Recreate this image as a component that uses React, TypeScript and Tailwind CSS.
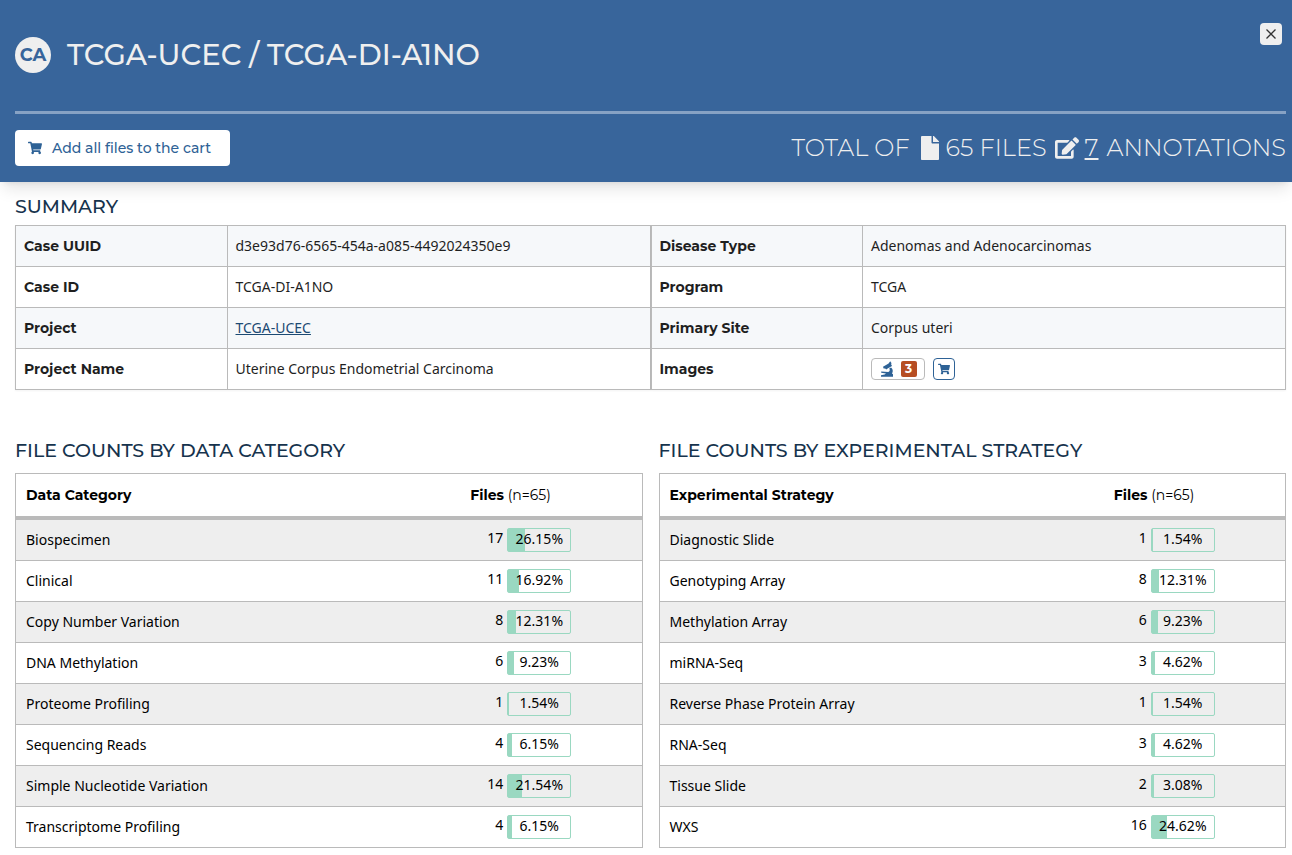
import type { ReactNode } from "react";
import { FaShoppingCart, FaFile, FaEdit } from "react-icons/fa";

const display = "font-['Montserrat','Inter',sans-serif]";

type Count = { name: string; files: number };

const TOTAL = 65;

const categories: Count[] = [
  { name: "Biospecimen", files: 17 },
  { name: "Clinical", files: 11 },
  { name: "Copy Number Variation", files: 8 },
  { name: "DNA Methylation", files: 6 },
  { name: "Proteome Profiling", files: 1 },
  { name: "Sequencing Reads", files: 4 },
  { name: "Simple Nucleotide Variation", files: 14 },
  { name: "Transcriptome Profiling", files: 4 },
];

const strategies: Count[] = [
  { name: "Diagnostic Slide", files: 1 },
  { name: "Genotyping Array", files: 8 },
  { name: "Methylation Array", files: 6 },
  { name: "miRNA-Seq", files: 3 },
  { name: "Reverse Phase Protein Array", files: 1 },
  { name: "RNA-Seq", files: 3 },
  { name: "Tissue Slide", files: 2 },
  { name: "WXS", files: 16 },
];

function MicroscopeIcon() {
  return (
    <svg viewBox="0 0 13 16" className="h-4 w-[13px]" fill="currentColor" aria-hidden="true">
      <path d="M10.2 0.2 L11.6 2.2 L11 3 L12 5 L7.6 7.6 L6.2 8.6 L5.2 7.6 L3.6 7.6 L3 5.8 L8.6 2.4 Z" />
      <path d="M9.2 7.6 L11 6.4 C13 8 13.2 10.4 12 12.6 L13 13.2 V15.8 H1 V14.2 L4.6 13.6 L6 12.6 L1.2 11.8 V10.6 L8.4 11 C9.8 10.4 10.2 8.8 9.2 7.6 Z" />
    </svg>
  );
}

function SectionTitle({ children }: { children: ReactNode }) {
  return <h2 className={`${display} text-[19px] leading-7 font-medium text-[#16334d]`}>{children}</h2>;
}

function SummaryTable({ rows }: { rows: [string, ReactNode][] }) {
  return (
    <table className="w-1/2 table-fixed border-collapse text-sm text-[#1f1f1f] shadow-xs">
      <tbody>
        {rows.map(([label, value]) => (
          <tr key={label} className="h-[41px] odd:bg-[#f6f8fa]">
            <th scope="row" className={`${display} w-1/3 border border-[#bababa] px-2 text-left font-bold`}>
              {label}
            </th>
            <td className="border border-[#bababa] px-2">{value}</td>
          </tr>
        ))}
      </tbody>
    </table>
  );
}

function CountTable({ title, column, rows }: { title: string; column: string; rows: Count[] }) {
  return (
    <section className="flex-1">
      <SectionTitle>{title}</SectionTitle>
      <table className="mt-2 w-full table-fixed border-collapse border border-[#bababa] text-sm text-black">
        <thead>
          <tr className={`${display} h-11 border-b-4 border-[#bababa]`}>
            <th scope="col" className="w-[71%] px-2.5 text-left font-bold">{column}</th>
            <th scope="col" className="px-2.5 text-left font-normal">
              <span className="font-bold">Files</span> (n={TOTAL})
            </th>
          </tr>
        </thead>
        <tbody>
          {rows.map(({ name, files }) => {
            const percent = ((files / TOTAL) * 100).toFixed(2) + "%";
            return (
              <tr key={name} className="h-[41px] border-b border-[#bababa] first:h-[43px] odd:bg-[#eeeeee]">
                <td className="px-2.5">{name}</td>
                <td className="px-2.5">
                  <div className="flex gap-1">
                    <span className="w-[33px] text-right leading-5">{files}</span>
                    <div className="relative h-6 w-16 rounded-xs border border-[#9ad8c1]">
                      <div className="h-full bg-[#9ad8c1]" style={{ width: percent }} />
                      <span className="absolute inset-0 text-center leading-5">{percent}</span>
                    </div>
                  </div>
                </td>
              </tr>
            );
          })}
        </tbody>
      </table>
    </section>
  );
}

export default function App() {
  return (
    <div className="min-h-screen bg-white font-['Noto_Sans',sans-serif]">
      <header className={`${display} bg-[#38659b] pr-1.5 pb-4 pl-[15px] text-[#efefef] shadow-lg`}>
        <div className="flex min-h-[111px] items-center gap-4 pb-0.5">
          <span className="flex size-9 items-center justify-center rounded-full bg-[#efefef] text-lg font-bold text-[#38659b]">
            CA
          </span>
          <h1 className="text-[29px] font-medium">TCGA-UCEC / TCGA-DI-A1NO</h1>
          <button
            type="button"
            aria-label="Close"
            className="mt-[23px] mr-1 ml-auto flex size-[22px] items-center justify-center self-start rounded bg-[#efefef] text-[#333333]"
          >
            <svg viewBox="0 0 10 10" className="size-2.5" stroke="currentColor" strokeWidth="1.3" fill="none">
              <path d="M0.5 0.5 L9.5 9.5 M9.5 0.5 L0.5 9.5" />
            </svg>
          </button>
        </div>
        <div className="flex items-center justify-between border-t-3 border-[#87a2c4] pt-4">
          <button
            type="button"
            className="flex h-9 w-[215px] items-center gap-2.5 rounded bg-white px-[13px] text-sm font-medium text-[#2e6296]"
          >
            <FaShoppingCart className="size-3.5" />
            Add all files to the cart
          </button>
          <p className="flex items-center text-2xl font-light">
            TOTAL OF
            <FaFile className="mr-1 ml-2 size-6" />
            65 FILES
            <FaEdit className="mr-1.5 ml-2 size-6" />
            <a href="#annotations" className="mr-2 underline">7</a>
            ANNOTATIONS
          </p>
        </div>
      </header>

      <main className="pt-[11px] pr-1.5 pb-2 pl-[15px]">
        <SectionTitle>SUMMARY</SectionTitle>
        <div className="mt-1 flex">
          <SummaryTable
            rows={[
              ["Case UUID", "d3e93d76-6565-454a-a085-4492024350e9"],
              ["Case ID", "TCGA-DI-A1NO"],
              ["Project", <a href="#project" className="text-[#1c4a73] underline">TCGA-UCEC</a>],
              ["Project Name", "Uterine Corpus Endometrial Carcinoma"],
            ]}
          />
          <SummaryTable
            rows={[
              ["Disease Type", "Adenomas and Adenocarcinomas"],
              ["Program", "TCGA"],
              ["Primary Site", "Corpus uteri"],
              [
                "Images",
                <div className="flex items-center gap-2 text-[#2e6296]">
                  <button
                    type="button"
                    aria-label="View 3 slide images"
                    className="flex h-[22px] w-[54px] items-center justify-center gap-2 rounded border border-[#bababa] bg-white"
                  >
                    <MicroscopeIcon />
                    <span className={`${display} size-4 rounded-xs bg-[#b64d22] text-xs leading-4 font-bold text-white`}>
                      3
                    </span>
                  </button>
                  <button
                    type="button"
                    aria-label="Add images to the cart"
                    className="flex size-[22px] items-center justify-center rounded border border-[#2e6296] bg-white"
                  >
                    <FaShoppingCart className="size-3" />
                  </button>
                </div>,
              ],
            ]}
          />
        </div>
        <div className="mt-[47px] flex gap-4">
          <CountTable title="FILE COUNTS BY DATA CATEGORY" column="Data Category" rows={categories} />
          <CountTable title="FILE COUNTS BY EXPERIMENTAL STRATEGY" column="Experimental Strategy" rows={strategies} />
        </div>
      </main>
    </div>
  );
}
